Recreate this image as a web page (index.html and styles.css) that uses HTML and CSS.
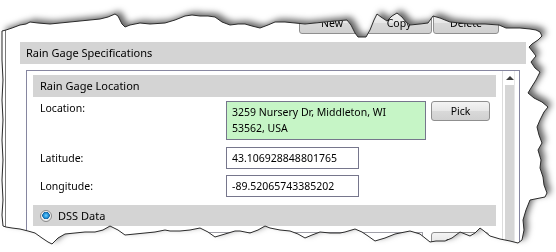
FILE: index.html
```html
<!DOCTYPE html>
<html>
<head>
<meta charset="utf-8">
<link rel="stylesheet" href="styles.css">
</head>
<body>
<div class="stage">
  <div class="shadow">
    <div class="paper">
      <div class="window">
        <div class="toolbar">
          <button class="btn tb">New</button>
          <button class="btn tb">Copy</button>
          <button class="btn tb">Delete</button>
        </div>
        <div class="section-head">Rain Gage Specifications</div>
        <div class="panel">
          <div class="panel-body">
            <div class="sub-head">Rain Gage Location</div>
            <div class="row row-loc">
              <div class="label label-top">Location:</div>
              <div class="address">3259 Nursery Dr, Middleton, WI<br>53562, USA</div>
              <button class="btn pick">Pick</button>
            </div>
            <div class="row row-lat">
              <div class="label">Latitude:</div>
              <div class="input">43.106928848801765</div>
            </div>
            <div class="row row-lon">
              <div class="label">Longitude:</div>
              <div class="input">-89.52065743385202</div>
            </div>
            <div class="sub-head dss">
              <span class="radio"></span>
              <span>DSS Data</span>
            </div>
            <div class="row-file">
              <div class="file-box"></div>
              <button class="btn sel">Select</button>
            </div>
          </div>
          <div class="scrollbar">
            <div class="scroll-line">
              <div class="arrow"></div>
              <div class="track"></div>
            </div>
          </div>
        </div>
      </div>
    </div>
  </div>
  <svg class="edge" width="556" height="252" viewBox="0 0 556 252">
    <path d="M2,31 L6,30 L12,28 L20,25 L26,24 L30,22 L38,23 L50,24 L60,23 L70,22 L80,21 L90,20 L100,19 L108,17 L115,14 L118,16 L122,24 L125,27 L130,25 L140,23 L150,24 L165,23 L175,20 L185,16 L192,15 L200,16 L208,16 L215,17 L222,22 L230,25 L238,24 L245,24 L252,26 L260,28 L268,25 L275,22 L285,22 L295,23 L305,24 L315,23 L325,22 L335,21 L347,20 L351,25 L355,33 L358,37 L366,37 L370,30 L374,20 L377,14 L381,17 L387,21 L392,16 L397,13 L402,17 L406,22 L410,25 L420,24 L428,23 L433,16 L440,18 L450,22 L460,23 L470,24 L485,24 L499,25 L506,28 L520,28 L530,29 L536,30 L540,32 L542,36 L538,40 L532,44 L529,47 L533,52 L536,56 L531,62 L535,68 L540,72 L536,80 L531,88 L528,93 L534,98 L542,102 L548,107 L544,112 L540,120 L537,127 L539,135 L542,143 L538,150 L541,160 L540,168 L543,177 L544,185 L547,193 L545,197 L530,200 L526,210 L523,220 L524,230 L522,240 L518,243 L510,241 L500,239 L490,236 L484,231 L480,228 L475,233 L470,236 L465,234 L460,232 L452,238 L445,241 L436,241 L430,242 L425,238 L420,234 L410,231 L400,233 L395,234 L385,238 L375,241 L368,236 L362,232 L355,229 L345,232 L340,233 L330,233 L320,232 L312,235 L305,238 L298,234 L290,231 L280,230 L270,228 L265,226 L258,230 L250,233 L240,231 L235,231 L225,234 L215,237 L208,232 L200,228 L190,230 L180,231 L170,231 L165,230 L155,232 L145,233 L135,234 L125,235 L118,230 L110,226 L103,230 L95,232 L85,232 L75,233 L65,234 L58,238 L52,244 L48,242 L42,238 L35,233 L28,231 L20,229 L12,228 L6,227 L3,226 L2,215 L3,200 L2,180 L3,160 L2,140 L3,120 L2,100 L3,80 L2,60 L2,40 Z" fill="none" stroke="#2b2b2b" stroke-width="1"/>
  </svg>
</div>
</body>
</html>
```
FILE: styles.css
```css
html, body {
  margin: 0;
  padding: 0;
  background: #ffffff;
}
body {
  font-family: "Segoe UI", "Noto Sans", "Open Sans", sans-serif;
  font-size: 10.5px;
  color: #000000;
}
.stage {
  position: relative;
  width: 556px;
  height: 252px;
  overflow: hidden;
}
.shadow {
  width: 556px;
  height: 252px;
  filter: drop-shadow(4px -3px 3px rgba(0, 0, 0, 0.6));
}
.paper {
  width: 556px;
  height: 252px;
  background: #ffffff;
  box-sizing: border-box;
  padding-left: 5px;
  clip-path: path("M2,31 L6,30 L12,28 L20,25 L26,24 L30,22 L38,23 L50,24 L60,23 L70,22 L80,21 L90,20 L100,19 L108,17 L115,14 L118,16 L122,24 L125,27 L130,25 L140,23 L150,24 L165,23 L175,20 L185,16 L192,15 L200,16 L208,16 L215,17 L222,22 L230,25 L238,24 L245,24 L252,26 L260,28 L268,25 L275,22 L285,22 L295,23 L305,24 L315,23 L325,22 L335,21 L347,20 L351,25 L355,33 L358,37 L366,37 L370,30 L374,20 L377,14 L381,17 L387,21 L392,16 L397,13 L402,17 L406,22 L410,25 L420,24 L428,23 L433,16 L440,18 L450,22 L460,23 L470,24 L485,24 L499,25 L506,28 L520,28 L530,29 L536,30 L540,32 L542,36 L538,40 L532,44 L529,47 L533,52 L536,56 L531,62 L535,68 L540,72 L536,80 L531,88 L528,93 L534,98 L542,102 L548,107 L544,112 L540,120 L537,127 L539,135 L542,143 L538,150 L541,160 L540,168 L543,177 L544,185 L547,193 L545,197 L530,200 L526,210 L523,220 L524,230 L522,240 L518,243 L510,241 L500,239 L490,236 L484,231 L480,228 L475,233 L470,236 L465,234 L460,232 L452,238 L445,241 L436,241 L430,242 L425,238 L420,234 L410,231 L400,233 L395,234 L385,238 L375,241 L368,236 L362,232 L355,229 L345,232 L340,233 L330,233 L320,232 L312,235 L305,238 L298,234 L290,231 L280,230 L270,228 L265,226 L258,230 L250,233 L240,231 L235,231 L225,234 L215,237 L208,232 L200,228 L190,230 L180,231 L170,231 L165,230 L155,232 L145,233 L135,234 L125,235 L118,230 L110,226 L103,230 L95,232 L85,232 L75,233 L65,234 L58,238 L52,244 L48,242 L42,238 L35,233 L28,231 L20,229 L12,228 L6,227 L3,226 L2,215 L3,200 L2,180 L3,160 L2,140 L3,120 L2,100 L3,80 L2,60 L2,40 Z");
}
.window {
  height: 252px;
  border-left: 1px solid #7a7a7a;
  box-sizing: border-box;
}
.edge {
  position: absolute;
  left: 0;
  top: 0;
  pointer-events: none;
}
.btn {
  font-family: inherit;
  font-size: 10.5px;
  color: #000000;
  box-sizing: border-box;
  border: 1px solid #8f8f8f;
  border-radius: 3px;
  background: linear-gradient(#f4f4f4, #e6e6e6 50%, #d9d9d9 51%, #d0d0d0);
  padding: 0;
  margin: 0;
}
.toolbar {
  display: flex;
  gap: 1px;
  padding: 12px 0 0 293px;
}
.tb {
  width: 66px;
  height: 22px;
}
.section-head {
  margin: 8px 0 0 14px;
  width: 506px;
  height: 22px;
  line-height: 22px;
  background: #d4d4d4;
  padding-left: 6px;
  box-sizing: border-box;
  font-size: 11px;
}
.panel {
  margin: 6px 0 0 20px;
  width: 494px;
  height: 200px;
  border: 1px solid #8686a0;
  box-sizing: border-box;
  display: flex;
}
.panel-body {
  width: 470px;
  padding: 4px 0 0 6px;
  box-sizing: border-box;
}
.sub-head {
  width: 463px;
  height: 22px;
  line-height: 22px;
  background: #d4d4d4;
  padding-left: 7px;
  box-sizing: border-box;
  font-size: 11px;
}
.row {
  display: flex;
  align-items: center;
}
.label {
  width: 186px;
  padding-left: 7px;
  flex: none;
}
.label-top {
  align-self: flex-start;
  line-height: 15px;
}
.row-loc {
  margin-top: 4px;
  align-items: flex-start;
  gap: 5px;
}
.row-loc .label {
  margin-right: -5px;
}
.address {
  width: 200px;
  height: 39px;
  box-sizing: border-box;
  background: #c6f5c6;
  border: 1px solid #76768c;
  padding: 2px 0 0 5px;
  line-height: 16px;
}
.pick {
  width: 59px;
  height: 20px;
}
.input {
  width: 133px;
  height: 22px;
  box-sizing: border-box;
  border: 1px solid #76768c;
  padding-left: 5px;
  line-height: 20px;
}
.row-lat {
  margin-top: 7px;
}
.row-lon {
  margin-top: 6px;
}
.dss {
  margin-top: 8px;
  height: 21px;
  line-height: 21px;
  display: flex;
  align-items: center;
  gap: 6px;
  padding-left: 7px;
}
.radio {
  width: 12px;
  height: 12px;
  border-radius: 50%;
  box-sizing: border-box;
  border: 1px solid #8a8a8a;
  background: radial-gradient(circle at 50% 45%, #6fd0ff 0, #1e8fd6 2.5px, #17609a 3.5px, #f4f4f4 4px, #dedede 6px);
}
.row-file {
  margin-top: 6px;
  display: flex;
  gap: 8px;
  padding-left: 117px;
}
.file-box {
  width: 273px;
  height: 22px;
  border: 1px solid #a0a0a8;
  box-sizing: border-box;
}
.sel {
  width: 58px;
  height: 22px;
}
.scrollbar {
  width: 22px;
  padding-left: 5px;
  box-sizing: border-box;
}
.scroll-line {
  height: 100%;
  width: 13px;
  border-left: 1px solid #dcdcdc;
  border-right: 1px solid #e8e8e8;
  box-sizing: border-box;
  padding: 5px 0 0 2px;
}
.arrow {
  width: 0;
  height: 0;
  margin-left: 1px;
  border-left: 4px solid transparent;
  border-right: 4px solid transparent;
  border-bottom: 4px solid #404040;
}
.track {
  margin-top: 5px;
  width: 9px;
  height: 200px;
  background: #d6d6d6;
}
```
